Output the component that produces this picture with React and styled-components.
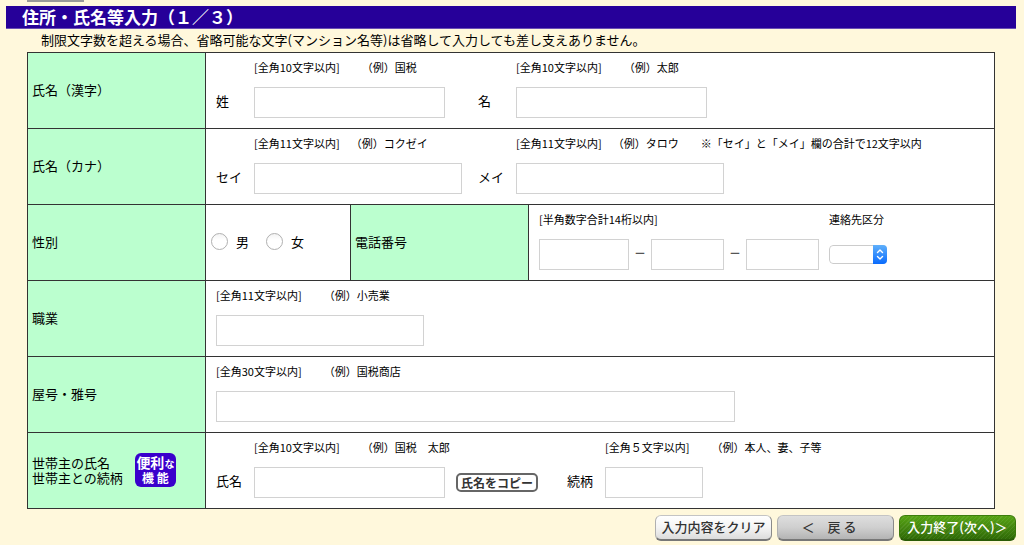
import React from "react";
import styled, { createGlobalStyle, css } from "styled-components";

const line = "#333";
const fonts = '"Noto Sans CJK JP", sans-serif';

const GlobalStyle = createGlobalStyle`
  *, *::before, *::after { box-sizing: border-box; }
  body { margin: 0; background: #fff8dc; }
  body, input, button, select { font-family: ${fonts}; text-spacing-trim: space-all; }
`;

const Page = styled.form`
  display: flex;
  flex-direction: column;
  min-height: 100vh;
  background: #fff8dc;
  border-bottom: 1px solid #aaa894;
  color: #000;
  font-size: 13px;
  line-height: 16px;
`;

const TabEdge = styled.div`
  width: 57px;
  height: 2px;
  margin-left: 27px;
  background: #999;
`;

const Title = styled.h1`
  margin: 4px 8px 0 6px;
  padding-left: 16px;
  background: #260099;
  border-bottom: 1px solid #6a4fb4;
  color: #fff;
  font-size: 17px;
  font-weight: 700;
  line-height: 22px;
`;

const Lead = styled.p`
  margin: 3px 0 4px 41px;
  line-height: 16px;
`;

const Sheet = styled.div`
  margin: 0 29px 0 27px;
  border: 1px solid ${line};
  border-bottom: 0;
  background: #fff;
`;

const Row = styled.div`
  display: grid;
  grid-template-columns: ${(p) => (p.$split ? "178px 145px 178px 1fr" : "178px 1fr")};
  border-bottom: 1px solid ${line};
`;

const Head = styled.div`
  display: flex;
  align-items: center;
  gap: 12px;
  padding: 0 0 2px 4px;
  background: #bbffcf;
  border-right: 1px solid ${line};
`;

const HeadLine = styled.span`
  display: block;
  line-height: 15px;
`;

const Cell = styled.div`
  display: flex;
  align-items: flex-end;
  padding: 6px 0 10px 10px;
`;

const GenderCell = styled.div`
  display: flex;
  align-items: center;
  gap: 17px;
  padding: 0 0 2px 5px;
  border-right: 1px solid ${line};
`;

const Choice = styled.label`
  display: flex;
  align-items: center;
  gap: 8px;
`;

const Radio = styled.input`
  appearance: none;
  width: 17px;
  height: 17px;
  margin: 0;
  border: 1px solid #b0b0b0;
  border-radius: 50%;
  background: linear-gradient(#f3f3f3, #fff 40%);
  &:checked { background: radial-gradient(#1a6df5 35%, #fff 40%); }
`;

const FieldBox = styled.div`
  display: grid;
  grid-template-columns: ${(p) => (p.$labelled ? "38px 1fr" : "1fr")};
  row-gap: 12px;
  align-items: center;
  ${(p) => p.$slot && css`width: ${p.$slot}px;`}
`;

const FieldLabel = styled.label`
  padding-bottom: 4px;
`;

const Note = styled.span`
  grid-column: -2 / -1;
  font-size: 11px;
  white-space: pre;
`;

const TextBox = styled.input`
  width: ${(p) => p.$w}px;
  height: 31px;
  padding: 0 6px;
  border: 1px solid #d2d2d2;
  border-radius: 0;
  background: #fff;
  font-size: 13px;
`;

const PhoneParts = styled.div`
  display: flex;
  align-items: center;
`;

const Dash = styled.span`
  width: 22px;
  padding-bottom: 4px;
  text-align: center;
  color: #555;
  font-size: 12px;
  font-weight: 700;
`;

const ContactBox = styled.label`
  display: flex;
  flex-direction: column;
  gap: 18px;
  margin: 0 0 6px 10px;
`;

const SelectWrap = styled.span`
  display: grid;
  width: 58px;
  height: 19px;
  border-radius: 4px;
  overflow: hidden;
`;

const Select = styled.select`
  grid-area: 1 / 1;
  appearance: none;
  padding: 0 18px 0 6px;
  border: 1px solid #ccc;
  border-radius: 4px;
  background: #fff;
  font-size: 11px;
`;

const SelectArrows = styled.svg`
  grid-area: 1 / 1;
  justify-self: end;
  width: 14px;
  height: 19px;
  background: linear-gradient(#5fb0fb, #0a6bfd);
  pointer-events: none;
`;

const Badge = styled.span`
  display: flex;
  flex-direction: column;
  align-items: center;
  width: 41px;
  height: 34px;
  border-radius: 6px;
  background: #3a00cc;
  color: #fff;
  font-weight: 700;
  white-space: nowrap;
`;

const BadgeUpper = styled.span`
  font-size: 14px;
  line-height: 18px;
`;

const BadgeSmall = styled.small`
  font-size: 10px;
  line-height: 10px;
`;

const BadgeLower = styled.span`
  font-size: 12px;
  line-height: 13px;
`;

const CopyButton = styled.button`
  width: 82px;
  height: 19px;
  margin: 0 29px 6px 0;
  padding: 0;
  border: 2px solid #666;
  border-radius: 5px;
  background: #fff;
  color: #333;
  font-size: 12px;
  font-weight: 700;
  line-height: 14px;
  white-space: nowrap;
`;

const Actions = styled.div`
  display: flex;
  justify-content: flex-end;
  gap: 5px;
  padding: 6px 8px 4px;
`;

const tones = {
  light: css`
    background: linear-gradient(#fff, #f4f4f4 50%, #dcdcdc);
    color: #333;
  `,
  gray: css`
    background: linear-gradient(#dedede, #cfcfcf 50%, #b4b4b4);
    color: #333;
  `,
  green: css`
    background:
      repeating-linear-gradient(135deg, rgba(255, 255, 255, 0.07) 0 1px, transparent 1px 3px),
      linear-gradient(#57a413, #43860f 50%, #2f6a06);
    border-color: #3d7d0c #3a760b #2a5c06;
    color: #fff;
  `,
};

const ActionButton = styled.button`
  width: 117px;
  height: 26px;
  padding: 0 0 2px;
  border: 1px solid;
  border-color: #c4c4c4 #8a8a8a #777 #b0b0b0;
  border-bottom-width: 2px;
  border-radius: 6px;
  font-size: 13px;
  font-weight: 500;
  line-height: 20px;
  white-space: pre;
  ${(p) => tones[p.$tone]}
`;

function Field({ id, label, name, note, w, slot }) {
  return (
    <FieldBox $labelled={Boolean(label)} $slot={slot}>
      <Note id={`${id}-note`}>{note}</Note>
      {label && <FieldLabel htmlFor={id}>{label}</FieldLabel>}
      <TextBox id={id} type="text" $w={w} aria-label={name} aria-describedby={`${id}-note`} />
    </FieldBox>
  );
}

export default function App() {
  return (
    <>
      <GlobalStyle />
      <Page onSubmit={(e) => e.preventDefault()}>
        <TabEdge />
        <Title>住所・氏名等入力（１／３）</Title>
        <Lead>制限文字数を超える場合、省略可能な文字(マンション名等)は省略して入力しても差し支えありません。</Lead>

        <Sheet>
          <Row>
            <Head>氏名（漢字）</Head>
            <Cell>
              <Field id="sei" label="姓" note="[全角10文字以内]　　（例）国税" w={191} slot={262} />
              <Field id="mei" label="名" note="[全角10文字以内]　　（例）太郎" w={191} />
            </Cell>
          </Row>
          <Row>
            <Head>氏名（カナ）</Head>
            <Cell>
              <Field id="sei-kana" label="セイ" note="[全角11文字以内]　（例）コクゼイ" w={208} slot={262} />
              <Field
                id="mei-kana"
                label="メイ"
                note="[全角11文字以内]　（例）タロウ　　※「セイ」と「メイ」欄の合計で12文字以内"
                w={208}
              />
            </Cell>
          </Row>
          <Row $split>
            <Head>性別</Head>
            <GenderCell role="radiogroup" aria-label="性別">
              <Choice><Radio type="radio" name="gender" value="m" />男</Choice>
              <Choice><Radio type="radio" name="gender" value="f" />女</Choice>
            </GenderCell>
            <Head>電話番号</Head>
            <Cell>
              <FieldBox>
                <Note>[半角数字合計14桁以内]</Note>
                <PhoneParts>
                  <TextBox type="tel" $w={90} aria-label="市外局番" />
                  <Dash>－</Dash>
                  <TextBox type="tel" $w={73} aria-label="市内局番" />
                  <Dash>－</Dash>
                  <TextBox type="tel" $w={73} aria-label="加入者番号" />
                </PhoneParts>
              </FieldBox>
              <ContactBox>
                <Note>連絡先区分</Note>
                <SelectWrap>
                  <Select defaultValue="">
                    <option value=""></option>
                  </Select>
                  <SelectArrows viewBox="0 0 14 19" aria-hidden="true">
                    <path
                      d="M4.5 7.6 7 5.1l2.5 2.5M4.5 11.4 7 13.9l2.5-2.5"
                      fill="none"
                      stroke="#fff"
                      strokeWidth="1.4"
                      strokeLinecap="round"
                      strokeLinejoin="round"
                    />
                  </SelectArrows>
                </SelectWrap>
              </ContactBox>
            </Cell>
          </Row>
          <Row>
            <Head>職業</Head>
            <Cell>
              <Field id="job" name="職業" note="[全角11文字以内]　　（例）小売業" w={208} />
            </Cell>
          </Row>
          <Row>
            <Head>屋号・雅号</Head>
            <Cell>
              <Field id="shop" name="屋号・雅号" note="[全角30文字以内]　　（例）国税商店" w={519} />
            </Cell>
          </Row>
          <Row>
            <Head>
              <div>
                <HeadLine>世帯主の氏名</HeadLine>
                <HeadLine>世帯主との続柄</HeadLine>
              </div>
              <Badge>
                <BadgeUpper>便利<BadgeSmall>な</BadgeSmall></BadgeUpper>
                <BadgeLower>機 能</BadgeLower>
              </Badge>
            </Head>
            <Cell>
              <Field id="head-name" label="氏名" note="[全角10文字以内]　　（例）国税　太郎" w={191} slot={240} />
              <CopyButton type="button">氏名をコピー</CopyButton>
              <Field id="relation" label="続柄" note="[全角５文字以内]　　（例）本人、妻、子等" w={98} />
            </Cell>
          </Row>
        </Sheet>

        <Actions>
          <ActionButton type="reset" $tone="light">入力内容をクリア</ActionButton>
          <ActionButton type="button" $tone="gray">＜　戻 る　</ActionButton>
          <ActionButton type="submit" $tone="green">入力終了(次へ)＞</ActionButton>
        </Actions>
      </Page>
    </>
  );
}
